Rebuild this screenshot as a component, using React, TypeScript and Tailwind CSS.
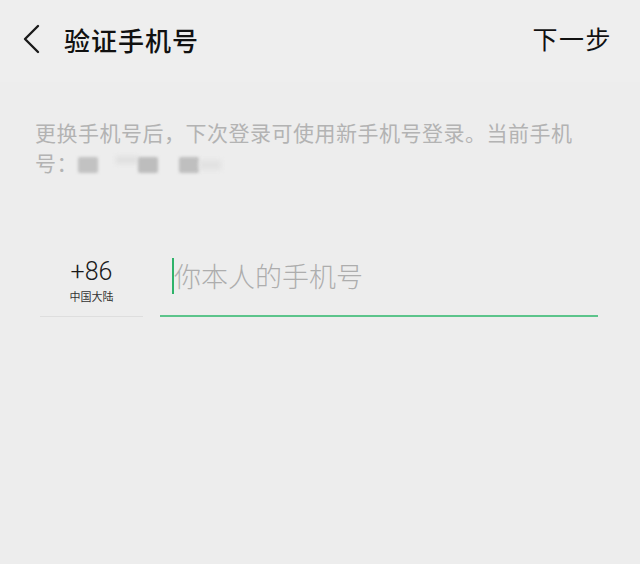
const font = { fontFamily: '"Noto Sans CJK SC", "Noto Sans", sans-serif' };

function MaskedNumber() {
  return (
    <span className="inline-flex items-center align-middle">
      <span className="w-[20px] h-[16px] bg-[#c2c2c2] rounded-[2px] blur-[1.5px]" />
      <span className="ml-[18px] w-[22px] h-[8px] bg-[#e0e0e0] blur-[2px] -translate-y-[5px]" />
      <span className="w-[20px] h-[16px] bg-[#bdbdbd] rounded-[2px] blur-[1.5px]" />
      <span className="ml-[21px] w-[20px] h-[16px] bg-[#bfbfbf] rounded-[2px] blur-[1.5px]" />
      <span className="w-[22px] h-[10px] bg-[#e2e2e2] blur-[2px]" />
    </span>
  );
}

export default function App() {
  return (
    <div className="w-[640px] h-[564px] bg-[#ededed] overflow-hidden" style={font}>
      <div className="h-[82px] flex items-center justify-between pl-[22px] pr-[28px] pb-[4px] bg-[#eeeeee]">
        <div className="flex items-center">
          <svg width="18" height="30" viewBox="0 0 18 30" className="text-[#1a1a1a]">
            <polyline points="16,2 3,15 16,28" fill="none" stroke="currentColor" strokeWidth="2.4" strokeLinecap="round" strokeLinejoin="round" />
          </svg>
          <span className="ml-[24px] text-[26px] font-medium text-[#111] tracking-[1px]">验证手机号</span>
        </div>
        <span className="text-[25px] text-[#111] tracking-[1.5px]">下一步</span>
      </div>

      <div className="px-[35px] pt-[35px] text-[21px] leading-[30px] text-[#b3b3b3] tracking-[0.5px]">
        <p>更换手机号后，下次登录可使用新手机号登录。当前手机</p>
        <p>
          号：<MaskedNumber />
        </p>
      </div>

      <div className="flex items-end px-[40px] mt-[70px] gap-[17px]">
        <div className="w-[103px] flex flex-col items-center border-b border-[#dedede] pb-[11px]">
          <span className="text-[25px] leading-[30px] text-[#1a1a1a] font-light" style={{ fontFamily: 'Roboto, "Noto Sans", sans-serif' }}>+86</span>
          <span className="text-[11px] leading-[18px] text-[#333]">中国大陆</span>
        </div>
        <div className="flex-1 mr-[2px] flex items-center h-[70px] border-b-2 border-[#5cc48b] pl-[12px] pb-[10px]">
          <span className="w-[2px] h-[36px] bg-[#2fb36a]" />
          <span className="text-[27px] font-light text-[#adadad]">你本人的手机号</span>
        </div>
      </div>
    </div>
  );
}
